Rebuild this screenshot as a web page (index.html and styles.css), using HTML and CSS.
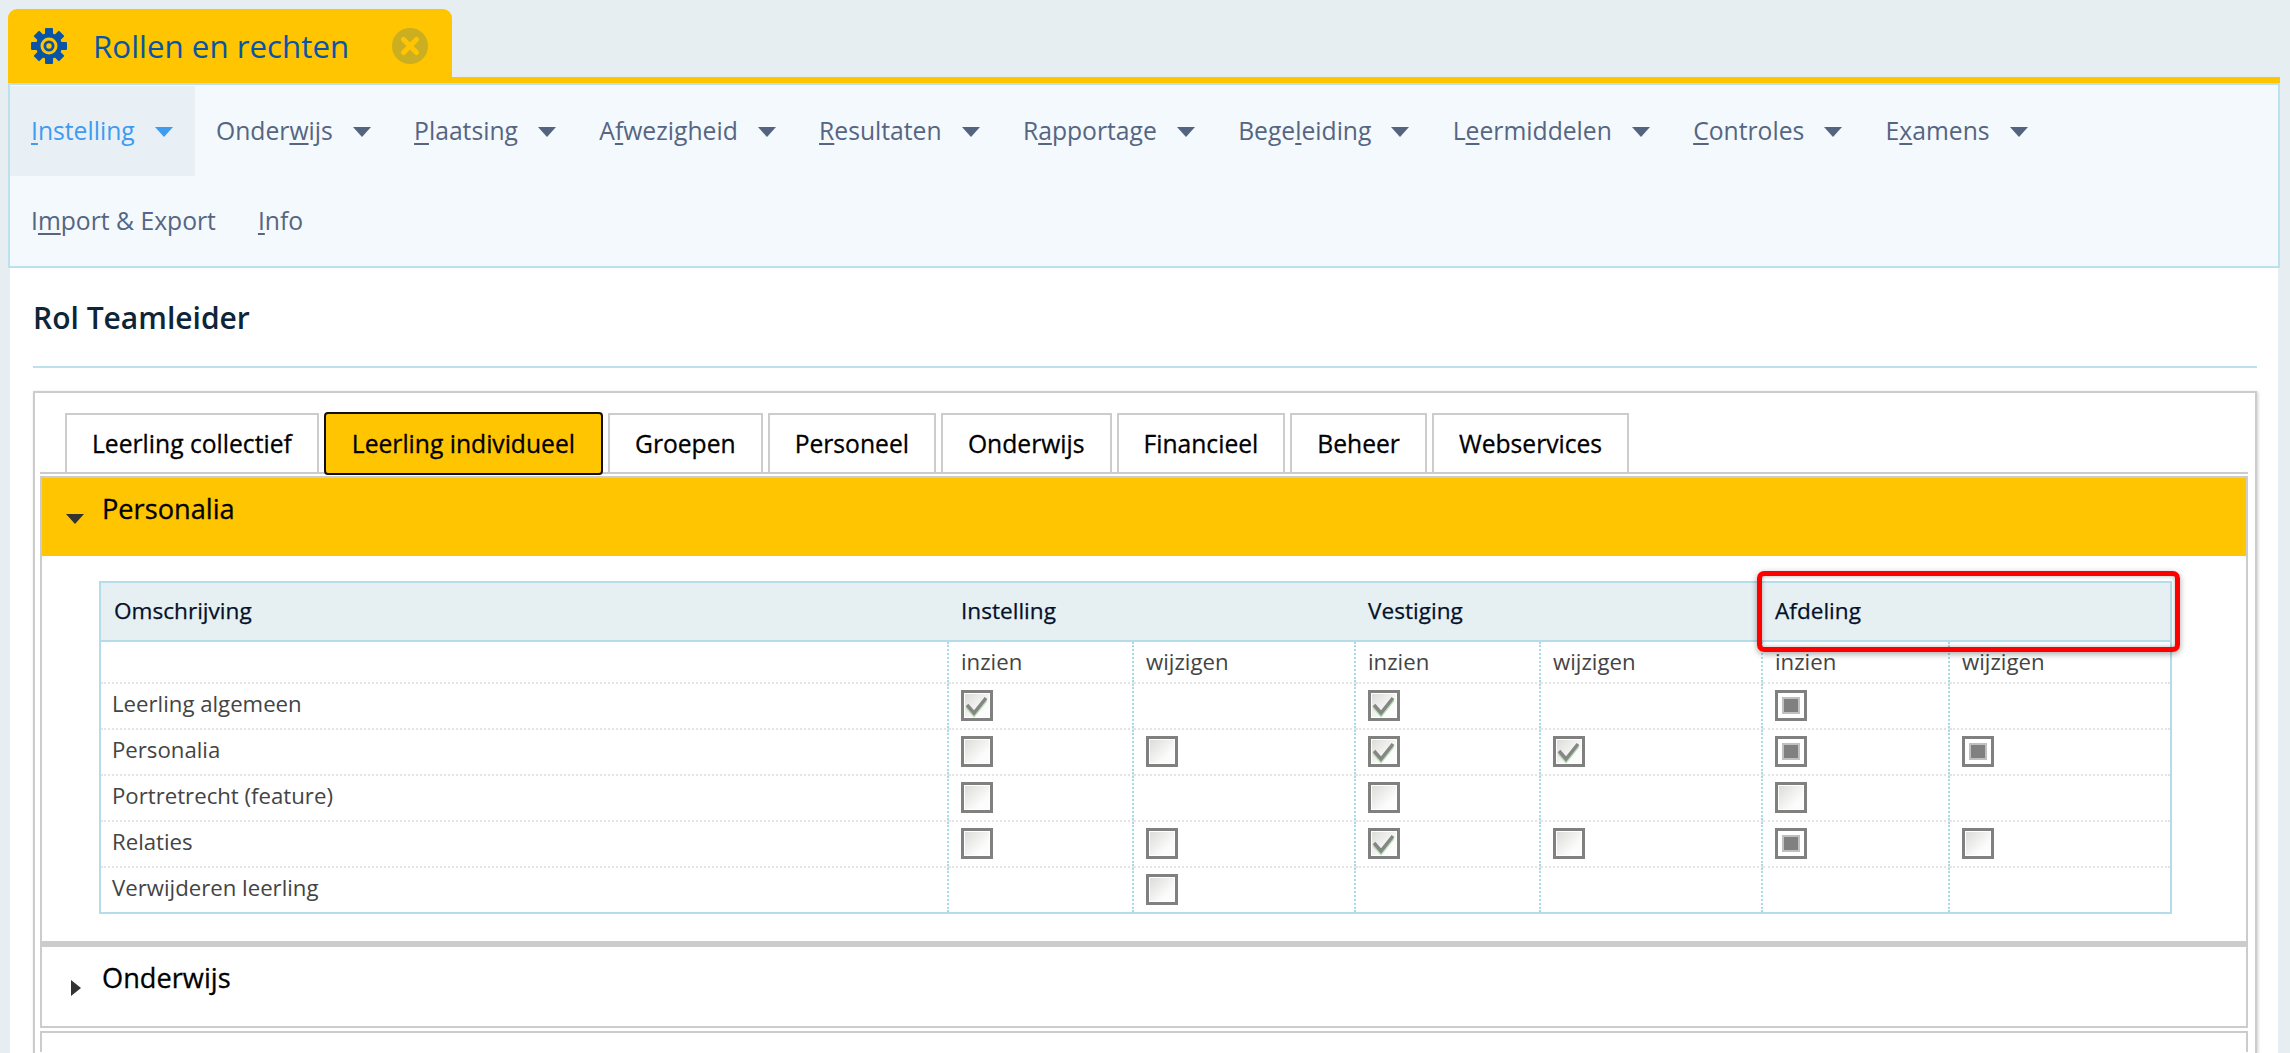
FILE: index.html
```html
<!DOCTYPE html>
<html lang="nl">
<head>
    <meta charset="UTF-8">
    <title>Rollen en rechten</title>
    <link rel="stylesheet" href="styles.css">
</head>
<body>
    <svg class="defs" width="0" height="0">
        <symbol id="check" viewBox="0 0 26 25">
            <path d="M3 14l7 8 12-15" fill="none" stroke="#b5e0b0" stroke-width="3.500"/>
            <path d="M3 12l7 8 12-15" fill="none" stroke="#868686" stroke-width="3.500"/>
        </symbol>
    </svg>

    <div class="app-tabs">
        <div class="app-tab">
            <svg class="gear" viewBox="0 0 36 36">
                <g fill="#0a54a8">
                    <circle cx="18" cy="18" r="13"/>
                    <rect x="14" y="0" width="8" height="36" rx="1"/>
                    <rect x="14" y="0" width="8" height="36" rx="1" transform="rotate(45 18 18)"/>
                    <rect x="14" y="0" width="8" height="36" rx="1" transform="rotate(90 18 18)"/>
                    <rect x="14" y="0" width="8" height="36" rx="1" transform="rotate(135 18 18)"/>
                </g>
                <circle cx="18" cy="18" r="8.500" fill="#ffc500"/>
                <circle cx="18" cy="18" r="5.500" fill="#0a54a8"/>
                <circle cx="18" cy="18" r="2.700" fill="#ffc500"/>
            </svg>
            <span class="app-tab-title">Rollen en rechten</span>
            <svg class="close" viewBox="0 0 36 36">
                <circle cx="18" cy="18" r="18" fill="#cbaf20"/>
                <path d="M11.500 11.500l13 13M24.500 11.500l-13 13" stroke="#ffc500" stroke-width="5" stroke-linecap="round"/>
            </svg>
        </div>
    </div>

    <nav class="menu">
        <a class="menu-item active"><span><u>I</u>nstelling</span><i class="caret"></i></a>
        <a class="menu-item"><span>Onder<u>w</u>ijs</span><i class="caret"></i></a>
        <a class="menu-item"><span><u>P</u>laatsing</span><i class="caret"></i></a>
        <a class="menu-item"><span>A<u>f</u>wezigheid</span><i class="caret"></i></a>
        <a class="menu-item"><span><u>R</u>esultaten</span><i class="caret"></i></a>
        <a class="menu-item"><span>R<u>a</u>pportage</span><i class="caret"></i></a>
        <a class="menu-item"><span>Bege<u>l</u>eiding</span><i class="caret"></i></a>
        <a class="menu-item"><span>L<u>e</u>ermiddelen</span><i class="caret"></i></a>
        <a class="menu-item"><span><u>C</u>ontroles</span><i class="caret"></i></a>
        <a class="menu-item"><span>E<u>x</u>amens</span><i class="caret"></i></a>
        <a class="menu-item plain"><span>I<u>m</u>port &amp; Export</span></a>
        <a class="menu-item plain"><span><u>I</u>nfo</span></a>
    </nav>

    <main class="content">
        <h1 class="page-title">Rol Teamleider</h1>

        <div class="panel">
            <div class="tabs">
                <a class="tab">Leerling collectief</a>
                <a class="tab selected">Leerling individueel</a>
                <a class="tab">Groepen</a>
                <a class="tab">Personeel</a>
                <a class="tab">Onderwijs</a>
                <a class="tab">Financieel</a>
                <a class="tab">Beheer</a>
                <a class="tab">Webservices</a>
            </div>

            <section class="acc open">
                <h2 class="acc-head"><i class="arrow-down"></i>Personalia</h2>
                <div class="acc-body">
                    <div class="table-wrap">
                        <table class="rights">
                            <colgroup>
                                <col class="col-name">
                                <col class="col-a"><col class="col-b">
                                <col class="col-a"><col class="col-b">
                                <col class="col-c"><col class="col-d">
                            </colgroup>
                            <thead>
                                <tr>
                                    <th>Omschrijving</th>
                                    <th colspan="2">Instelling</th>
                                    <th colspan="2">Vestiging</th>
                                    <th colspan="2">Afdeling</th>
                                </tr>
                            </thead>
                            <tbody>
                                <tr class="sub">
                                    <td></td>
                                    <td>inzien</td><td>wijzigen</td>
                                    <td>inzien</td><td>wijzigen</td>
                                    <td>inzien</td><td>wijzigen</td>
                                </tr>
                                <tr>
                                    <td>Leerling algemeen</td>
                                    <td><span class="cb"><svg><use href="#check"/></svg></span></td><td></td>
                                    <td><span class="cb"><svg><use href="#check"/></svg></span></td><td></td>
                                    <td><span class="cb part"></span></td><td></td>
                                </tr>
                                <tr>
                                    <td>Personalia</td>
                                    <td><span class="cb"></span></td><td><span class="cb"></span></td>
                                    <td><span class="cb"><svg><use href="#check"/></svg></span></td><td><span class="cb"><svg><use href="#check"/></svg></span></td>
                                    <td><span class="cb part"></span></td><td><span class="cb part"></span></td>
                                </tr>
                                <tr>
                                    <td>Portretrecht (feature)</td>
                                    <td><span class="cb"></span></td><td></td>
                                    <td><span class="cb"></span></td><td></td>
                                    <td><span class="cb"></span></td><td></td>
                                </tr>
                                <tr>
                                    <td>Relaties</td>
                                    <td><span class="cb"></span></td><td><span class="cb"></span></td>
                                    <td><span class="cb"><svg><use href="#check"/></svg></span></td><td><span class="cb"></span></td>
                                    <td><span class="cb part"></span></td><td><span class="cb"></span></td>
                                </tr>
                                <tr>
                                    <td>Verwijderen leerling</td>
                                    <td></td><td><span class="cb"></span></td>
                                    <td></td><td></td>
                                    <td></td><td></td>
                                </tr>
                            </tbody>
                        </table>
                        <div class="highlight"></div>
                    </div>
                </div>
            </section>

            <section class="acc closed">
                <h2 class="acc-head"><i class="arrow-right"></i>Onderwijs</h2>
            </section>

            <section class="acc empty"></section>
        </div>
    </main>
</body>
</html>
```

FILE: styles.css
```css
html, body {
    height: 100%;
    overflow: hidden;
}
body {
    margin: 0;
    background: #e6eef1;
    font-family: "Open Sans", "Noto Sans", sans-serif;
    color: #444;
}
.defs {
    position: absolute;
}

/* top tab strip */
.app-tabs {
    height: 83px;
    box-sizing: border-box;
    margin: 0 10px 0 8px;
    padding-top: 9px;
    border-bottom: 6px solid #ffc500;
}
.app-tab {
    width: 444px;
    height: 74px;
    box-sizing: border-box;
    padding: 0 24px 0 23px;
    display: flex;
    align-items: center;
    background: #ffc500;
    border-radius: 9px 9px 0 0;
}
.gear {
    width: 36px;
    height: 36px;
    margin-right: 26px;
}
.app-tab-title {
    font-size: 31.300px;
    color: #0a54a8;
}
.close {
    width: 36px;
    height: 36px;
    margin-left: auto;
}

/* main menu */
.menu {
    margin: 0 10px 0 8px;
    padding: 1px 20px 0 0;
    display: flex;
    flex-wrap: wrap;
    align-content: flex-start;
    height: 185px;
    box-sizing: border-box;
    background: #f3f9fd;
    border: 2px solid #bde0ef;
}
.menu-item {
    height: 90px;
    box-sizing: border-box;
    padding: 0 22.300px 2px 21px;
    display: flex;
    align-items: center;
    gap: 20px;
    font-size: 24.700px;
    color: #566582;
}
.menu-item.plain {
    padding: 0 21px 2px;
}
.menu-item.active {
    background: #e8f0f6;
    color: #3d9bf0;
}
.menu-item u {
    text-underline-offset: 3px;
    text-decoration-thickness: 2px;
}
.caret {
    width: 0;
    height: 0;
    margin-top: 4px;
    border-left: 9px solid transparent;
    border-right: 9px solid transparent;
    border-top: 10px solid #54647f;
}
.active .caret {
    border-top-color: #3d9bf0;
}

/* page body */
.content {
    margin: 0 12px 0 10px;
    padding: 0 21px 0 23px;
    height: 785px;
    background: #fff;
}
.page-title {
    margin: 0;
    height: 100px;
    box-sizing: border-box;
    padding: 28px 0 0;
    font-size: 30px;
    font-weight: 600;
    line-height: 44px;
    color: #0d2538;
    border-bottom: 2px solid #bde0ef;
}
.panel {
    margin-top: 23px;
    height: 662px;
    box-sizing: border-box;
    padding: 20px 7px 0 5px;
    border: 2px solid #ccc;
    border-bottom: 0;
    box-shadow: 1px 1px 3px rgba(0,0,0,0.2);
    overflow: hidden;
}

/* tab row */
.tabs {
    padding-left: 25px;
    height: 59px;
    display: flex;
    gap: 5px;
    border-bottom: 2px solid #ccc;
}
.tab {
    height: 61px;
    box-sizing: border-box;
    padding: 0 25px;
    display: flex;
    align-items: center;
    font-size: 24.650px;
    font-weight: 500;
    -webkit-text-stroke: 0.3px #000;
    color: #000;
    background: #fff;
    border: 2px solid #ccc;
}
.tab.selected {
    height: 63px;
    margin-top: -1px;
    padding: 0 26px;
    background: #ffc500;
    border: 2px solid #111;
    border-radius: 4px;
}

/* accordion */
.acc {
    border: 2px solid #ccc;
    background: #fff;
}
.acc.open {
    margin-top: 2px;
    border-bottom-width: 4px;
}
.acc.empty {
    margin-top: 3px;
    height: 19px;
    border-bottom: 0;
}
.acc-head {
    margin: 0;
    font-size: 27.200px;
    font-weight: 500;
    -webkit-text-stroke: 0.3px #000;
    color: #000;
    display: flex;
    align-items: center;
    line-height: 34px;
}
.open .acc-head {
    height: 78px;
    box-sizing: border-box;
    padding: 0 0 16px 24px;
    background: #ffc500;
}
.closed .acc-head {
    height: 79px;
    box-sizing: border-box;
    padding: 0 0 18px 29px;
}
.arrow-down {
    width: 0;
    height: 0;
    margin: 20px 18px 0 0;
    border-left: 9px solid transparent;
    border-right: 9px solid transparent;
    border-top: 10px solid #333;
}
.arrow-right {
    width: 0;
    height: 0;
    margin: 20px 21px 0 0;
    border-top: 8px solid transparent;
    border-bottom: 8px solid transparent;
    border-left: 10px solid #333;
}
.acc-body {
    padding: 25px 0 27px 57px;
}

/* rights table */
.table-wrap {
    position: relative;
    width: 2073px;
}
.rights {
    width: 2071px;
    table-layout: fixed;
    border-collapse: collapse;
    border: 2px solid #b5dcea;
    font-size: 22.200px;
}
.col-name { width: 848px; }
.col-a { width: 185px; }
.col-b { width: 222px; }
.col-c { width: 187px; }
.col-d { width: 222px; }
.rights th {
    height: 55px;
    padding: 0 0 2px 13px;
    text-align: left;
    font-size: 22.600px;
    font-weight: 500;
    -webkit-text-stroke: 0.25px #04112a;
    color: #04112a;
    background: #e6eff1;
    border-bottom: 2px solid #b5dcea;
}
.rights td {
    height: 38px;
    padding: 0 0 1px 12px;
    border-left: 2px dotted #a8dbe6;
    border-top: 2px dotted #e4e4e4;
    border-bottom: 2px dotted #e4e4e4;
}
.rights td:first-child {
    padding: 0 0 6px 11px;
    border-left: 0;
}
.rights tr.sub td {
    height: 38px;
    border-top: 0;
    padding-bottom: 2px;
}
.cb {
    display: block;
    width: 32px;
    height: 31px;
    box-sizing: border-box;
    border: 3px solid #808080;
    background: linear-gradient(135deg, #dadad6, #fcfcfc 70%);
    box-shadow: inset 0 0 0 1px #fff;
}
.cb svg {
    display: block;
    width: 26px;
    height: 25px;
    filter: blur(0.5px);
}
.cb.part {
    background: #fff;
    position: relative;
}
.cb.part::after {
    content: "";
    position: absolute;
    left: 6px;
    top: 6px;
    width: 14px;
    height: 13px;
    background: #808080;
    box-shadow: 0 0 0 2px #c0c0c0;
}
.highlight {
    position: absolute;
    left: 1658px;
    top: -10px;
    width: 423px;
    height: 81px;
    box-sizing: border-box;
    border: 5px solid #f00;
    border-radius: 7px;
    box-shadow: 0 2px 6px rgba(0,0,0,0.35), inset 0 0 4px rgba(0,0,0,0.3);
}
```
